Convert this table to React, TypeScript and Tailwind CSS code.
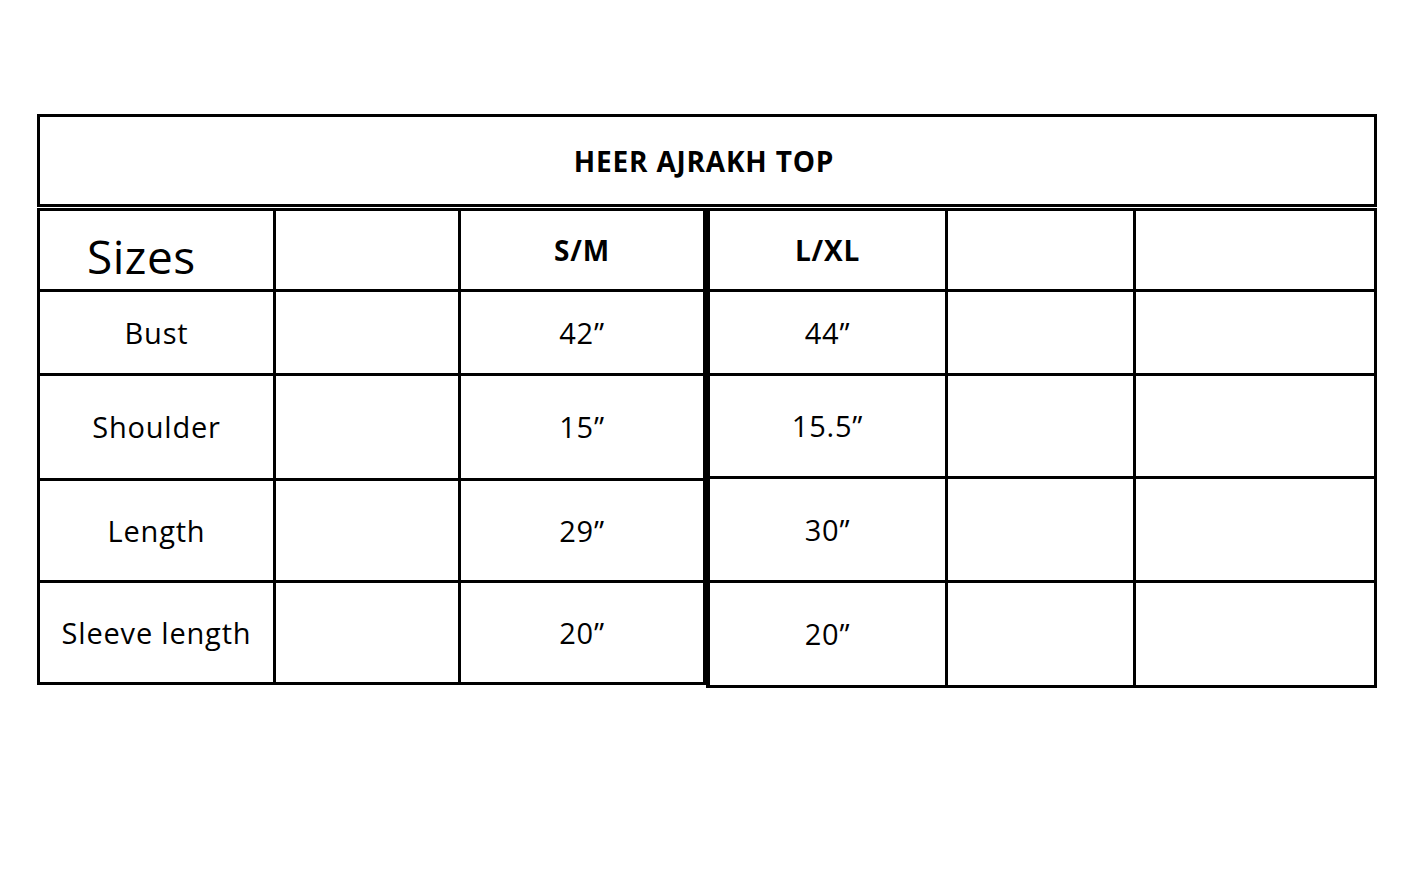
import React from 'react';

type Row = { label: string; sm: string; lxl: string };

const rows: Row[] = [
  { label: 'Bust', sm: '42”', lxl: '44”' },
  { label: 'Shoulder', sm: '15”', lxl: '15.5”' },
  { label: 'Length', sm: '29”', lxl: '30”' },
  { label: 'Sleeve length', sm: '20”', lxl: '20”' },
];

// row heights (bottom border included) differ a little between the two halves
const leftHeights = ['h-[84px]', 'h-[105px]', 'h-[102px]', 'h-[102px]'];
const rightHeights = ['h-[84px]', 'h-[103px]', 'h-[104px]', 'h-[105px]'];

const cell = 'flex items-center justify-center border-r-[3px] border-b-[3px] border-black';
const body = 'text-[29px] tracking-[0.8px]';
const head = 'text-[28px] font-bold tracking-[0.8px]';

const App: React.FC = () => {
  return (
    <div
      className="min-h-screen w-full bg-white text-black"
      style={{ fontFamily: '"Open Sans", "Noto Sans", sans-serif' }}
    >
      <div className="pl-[37px] pt-[114px]">
        {/* title bar */}
        <div className="flex h-[93px] w-[1340px] items-center justify-center border-[3px] border-black pr-[6px]">
          <h1 className={head}>HEER AJRAKH TOP</h1>
        </div>

        <div className="mt-px flex items-start">
          {/* left half */}
          <div className="flex w-[669px] flex-col border-t-[3px] border-l-[3px] border-black">
            <div className="flex h-[81px]">
              <div className="flex w-[236px] items-end border-r-[3px] border-b-[3px] border-black pb-[10px] pl-[47px]">
                <span className="text-[46px] leading-none tracking-[0.5px]">Sizes</span>
              </div>
              <div className={`${cell} w-[185px]`} />
              <div className={`${cell} w-[245px] ${head}`}>S/M</div>
            </div>
            {rows.map((r, i) => (
              <div key={r.label} className={`flex ${leftHeights[i]}`}>
                <div className={`${cell} w-[236px] ${body}`}>{r.label}</div>
                <div className={`${cell} w-[185px]`} />
                <div className={`${cell} w-[245px] ${body}`}>{r.sm}</div>
              </div>
            ))}
          </div>

          {/* right half */}
          <div className="flex w-[671px] flex-col border-t-[3px] border-l-[4px] border-black">
            <div className="flex h-[81px]">
              <div className={`${cell} w-[238px] ${head}`}>L/XL</div>
              <div className={`${cell} w-[188px]`} />
              <div className={`${cell} w-[241px]`} />
            </div>
            {rows.map((r, i) => (
              <div key={r.label} className={`flex ${rightHeights[i]}`}>
                <div className={`${cell} w-[238px] ${body}`}>{r.lxl}</div>
                <div className={`${cell} w-[188px]`} />
                <div className={`${cell} w-[241px]`} />
              </div>
            ))}
          </div>
        </div>
      </div>
    </div>
  );
};

export default App;
